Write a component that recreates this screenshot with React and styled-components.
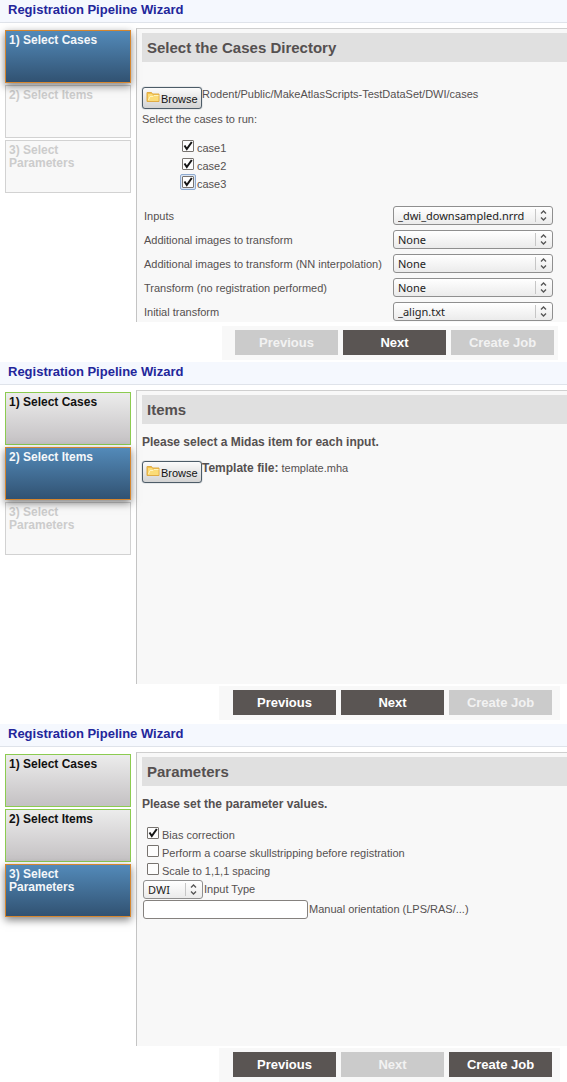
import React, { useState } from 'react';
import styled, { createGlobalStyle, css } from 'styled-components';

const GlobalStyle = createGlobalStyle`
  * {
    box-sizing: border-box;
  }

  body {
    margin: 0;
    background: #ffffff;
    color: #555050;
    font-family: "Liberation Sans", Arial, sans-serif;
    font-size: 11px;
    line-height: 14px;
  }
`;

const Wizard = styled.section`
  display: flex;
  flex-direction: column;
`;

const TitleBar = styled.h1`
  margin: 0;
  height: 23px;
  padding: 0 8px;
  background: #f5f8fe;
  border-bottom: 1px solid #dfe3ea;
  color: #23269b;
  font-size: 13px;
  line-height: 19px;
`;

const Body = styled.div`
  display: flex;
  align-items: stretch;
  gap: 5px;
  padding: 5px 0 0 5px;
`;

const Steps = styled.ol`
  display: flex;
  flex-direction: column;
  flex: none;
  gap: 2px;
  width: 126px;
  margin: 0;
  padding: 2px 0 0;
  list-style: none;
`;

const stepLook = {
  active: css`
    background: linear-gradient(#538ab9, #315272);
    border-color: #d5862f;
    color: #f4f7fa;
    box-shadow: 0 3px 8px rgba(0, 0, 0, 0.5);
  `,
  done: css`
    background: linear-gradient(#ececec, #c4c1c3);
    border-color: #8ccb50;
    color: #111111;
  `,
  pending: css`
    background: #f8f8f8;
    border-color: #d2d2d2;
    color: #cccccc;
  `,
};

const StepItem = styled.li`
  display: flex;
  position: relative;
  z-index: ${props => (props.$state === 'active' ? 1 : 0)};
`;

const StepButton = styled.button`
  display: flex;
  align-items: flex-start;
  width: 100%;
  height: 53px;
  padding: 3px 30px 0 3px;
  border: 1px solid;
  font: bold 12px/13px "Liberation Sans", Arial, sans-serif;
  text-align: left;
  ${props => stepLook[props.$state]}
`;

const Panel = styled.div`
  flex: 1;
  min-width: 0;
  min-height: 294px;
  padding: 4px 0 0 5px;
  background: #f8f8f8;
  border-top: 1px solid #cfcfcf;
  border-left: 1px solid #c4c4c4;
`;

const PanelTitle = styled.h2`
  margin: 0;
  padding: 0 5px;
  background: #e0e0e0;
  font-size: 15px;
  line-height: 29px;
`;

const Lead = styled.p`
  margin: 11px 0 12px;
  font-size: 12px;
  font-weight: bold;
`;

const BrowseRow = styled.div`
  display: flex;
  align-items: flex-start;
  margin-top: ${props => (props.$spaced ? 25 : 0)}px;

  b {
    font-size: 12px;
  }
`;

const BrowseButton = styled.button`
  display: flex;
  align-items: center;
  flex: none;
  gap: 1px;
  width: 60px;
  height: 22px;
  padding: 2px 2px 0 3px;
  background: linear-gradient(#fbfbfb, #d3d3d3);
  border: 1px solid #4d5c68;
  border-radius: 3px;
  box-shadow: 0 0 1px #4d5c68;
  color: #111111;
  font: 11px/14px "Liberation Sans", Arial, sans-serif;

  svg {
    flex: none;
    align-self: flex-start;
  }
`;

const Hint = styled.p`
  margin: 3px 0 12px;
`;

const CheckList = styled.div`
  margin-left: ${props => props.$indent}px;

  ${Lead} + & {
    margin-top: 14px;
  }
`;

const CheckRow = styled.div`
  display: flex;
  align-items: flex-start;
  height: 18px;

  label {
    padding: 3px 0 0 1px;
  }
`;

const CheckHolder = styled.span`
  display: grid;
  place-items: center;
  width: 16px;
  height: 16px;
  border: 1px solid ${props => (props.$highlighted ? '#8fabd0' : 'transparent')};
  border-radius: 2px;
  background: ${props => (props.$highlighted ? '#dbe6f5' : 'none')};

  input,
  svg {
    grid-area: 1 / 1;
  }

  svg {
    pointer-events: none;
    visibility: hidden;
  }

  input:checked + svg {
    visibility: visible;
  }
`;

const CheckInput = styled.input`
  appearance: none;
  width: 12px;
  height: 12px;
  margin: 0;
  background: #fdfdfd;
  border: 1px solid #77736f;
  border-radius: 1px;
`;

const OptionGrid = styled.div`
  display: grid;
  grid-template-columns: minmax(245px, max-content) 160px;
  align-items: center;
  gap: 5px 4px;
  padding: 14px 0 1px 2px;
`;

const SelectHolder = styled.span`
  display: grid;
  align-items: center;
  width: ${props => props.$width}px;

  select,
  svg {
    grid-area: 1 / 1;
  }

  svg {
    justify-self: end;
    pointer-events: none;
  }
`;

const SelectBox = styled.select`
  appearance: none;
  width: 100%;
  height: 19px;
  padding: 0 18px 0 4px;
  background: linear-gradient(#ffffff, #ebebeb);
  border: 1px solid #8f8f8f;
  border-radius: 3px;
  color: #222222;
  font: 11px/17px "Noto Sans", "Open Sans", sans-serif;
`;

const FieldRow = styled.div`
  display: flex;
  align-items: center;
  gap: 1px;
  height: 20px;
  padding-left: 1px;
`;

const TextInput = styled.input`
  width: 165px;
  height: 19px;
  padding: 0 4px;
  background: #ffffff;
  border: 1px solid #85817e;
  border-radius: 3px;
  font: 11px/17px "Liberation Sans", Arial, sans-serif;
`;

const Footer = styled.footer`
  display: flex;
  align-self: flex-end;
  gap: 5px;
  height: 34px;
  margin: ${props => (props.$wide ? '2px 7px 4px 0' : '4px 9px 2px 0')};
  padding: ${props => (props.$wide ? '4px 8px 5px 14px' : '4px 4px 5px 13px')};
  background: #f8f8f8;

  ${Wizard}:last-child & {
    margin-bottom: 0;
  }
`;

const FooterButton = styled.button`
  width: 103px;
  height: 25px;
  padding: 0;
  background: #5a5553;
  border: none;
  color: #ffffff;
  font: bold 13px/25px "Liberation Sans", Arial, sans-serif;

  &:disabled {
    background: #cbcbcb;
    color: #f2f2f2;
  }
`;

const STEPS = ['1) Select Cases', '2) Select Items', '3) Select Parameters'];

const OPTIONS = [
  { id: 'inputs', label: 'Inputs', value: '_dwi_downsampled.nrrd' },
  { id: 'additional', label: 'Additional images to transform', value: 'None' },
  { id: 'additional-nn', label: 'Additional images to transform (NN interpolation)', value: 'None' },
  { id: 'transform', label: 'Transform (no registration performed)', value: 'None' },
  { id: 'initial', label: 'Initial transform', value: '_align.txt' },
];

const FolderIcon = () => (
  <svg width="14" height="13" viewBox="0 0 14 13" aria-hidden="true">
    <path d="M1 11.500V2.500h4.500l1 1.500H13v7.500z" fill="#f3c04c" stroke="#e0ac45" />
    <path d="M2 4h4l1 1.500h5.500v5.500H2z" fill="#fbdc78" />
    <path d="M2.500 10L4 6.500h3l1-1h4.500" fill="none" stroke="#fff3bd" />
  </svg>
);

const CheckMark = () => (
  <svg width="12" height="12" viewBox="0 0 12 12" aria-hidden="true">
    <path d="M2.500 5.500L4.800 9L9.800 2" fill="none" stroke="#151515" strokeWidth="2" />
  </svg>
);

const Browse = () => (
  <BrowseButton type="button">
    <FolderIcon />
    Browse
  </BrowseButton>
);

const Check = ({ id, label, checked = false, highlighted }) => {
  const [on, setOn] = useState(checked);

  return (
    <CheckRow>
      <CheckHolder $highlighted={highlighted}>
        <CheckInput
          type="checkbox"
          id={id}
          checked={on}
          onChange={e => setOn(e.target.checked)}
        />
        <CheckMark />
      </CheckHolder>
      <label htmlFor={id}>{label}</label>
    </CheckRow>
  );
};

const Select = ({ id, value, width }) => (
  <SelectHolder $width={width}>
    <SelectBox id={id} defaultValue={value}>
      <option>{value}</option>
    </SelectBox>
    <svg width="18" height="19" viewBox="0 0 18 19" aria-hidden="true">
      <path d="M0.500 3v13" stroke="#c6c6c6" />
      <path d="M6 7.500L8.500 5L11 7.500M6 11.500L8.500 14L11 11.500" fill="none" stroke="#555555" strokeWidth="1.300" />
    </svg>
  </SelectHolder>
);

const stepState = (index, current) => {
  if (index === current) return 'active';
  return index < current ? 'done' : 'pending';
};

const WizardPage = ({ current, title, enabled, children }) => (
  <Wizard>
    <TitleBar>Registration Pipeline Wizard</TitleBar>
    <Body>
      <Steps>
        {STEPS.map((step, i) => (
          <StepItem key={step} $state={stepState(i, current)}>
            <StepButton type="button" $state={stepState(i, current)} disabled={i > current}>
              {step}
            </StepButton>
          </StepItem>
        ))}
      </Steps>
      <Panel>
        <PanelTitle>{title}</PanelTitle>
        {children}
      </Panel>
    </Body>
    <Footer $wide={current > 0}>
      {['Previous', 'Next', 'Create Job'].map(name => (
        <FooterButton key={name} type="button" disabled={!enabled.includes(name)}>
          {name}
        </FooterButton>
      ))}
    </Footer>
  </Wizard>
);

const App = () => (
  <>
    <GlobalStyle />
    <main>
      <WizardPage current={0} title="Select the Cases Directory" enabled={['Next']}>
        <BrowseRow $spaced>
          <Browse />
          <span>Rodent/Public/MakeAtlasScripts-TestDataSet/DWI/cases</span>
        </BrowseRow>
        <Hint>Select the cases to run:</Hint>
        <CheckList $indent={38}>
          <Check id="case1" label="case1" checked />
          <Check id="case2" label="case2" checked />
          <Check id="case3" label="case3" checked highlighted />
        </CheckList>
        <OptionGrid>
          {OPTIONS.map(option => (
            <React.Fragment key={option.id}>
              <label htmlFor={option.id}>{option.label}</label>
              <Select id={option.id} value={option.value} width={160} />
            </React.Fragment>
          ))}
        </OptionGrid>
      </WizardPage>

      <WizardPage current={1} title="Items" enabled={['Previous', 'Next']}>
        <Lead>Please select a Midas item for each input.</Lead>
        <BrowseRow>
          <Browse />
          <span><b>Template file:</b> template.mha</span>
        </BrowseRow>
      </WizardPage>

      <WizardPage current={2} title="Parameters" enabled={['Previous', 'Create Job']}>
        <Lead>Please set the parameter values.</Lead>
        <CheckList $indent={3}>
          <Check id="bias" label="Bias correction" checked />
          <Check id="skull" label="Perform a coarse skullstripping before registration" />
          <Check id="scale" label="Scale to 1,1,1 spacing" />
        </CheckList>
        <FieldRow>
          <Select id="input-type" value="DWI" width={60} />
          <label htmlFor="input-type">Input Type</label>
        </FieldRow>
        <FieldRow>
          <TextInput id="orientation" type="text" />
          <label htmlFor="orientation">Manual orientation (LPS/RAS/...)</label>
        </FieldRow>
      </WizardPage>
    </main>
  </>
);

export default App;
